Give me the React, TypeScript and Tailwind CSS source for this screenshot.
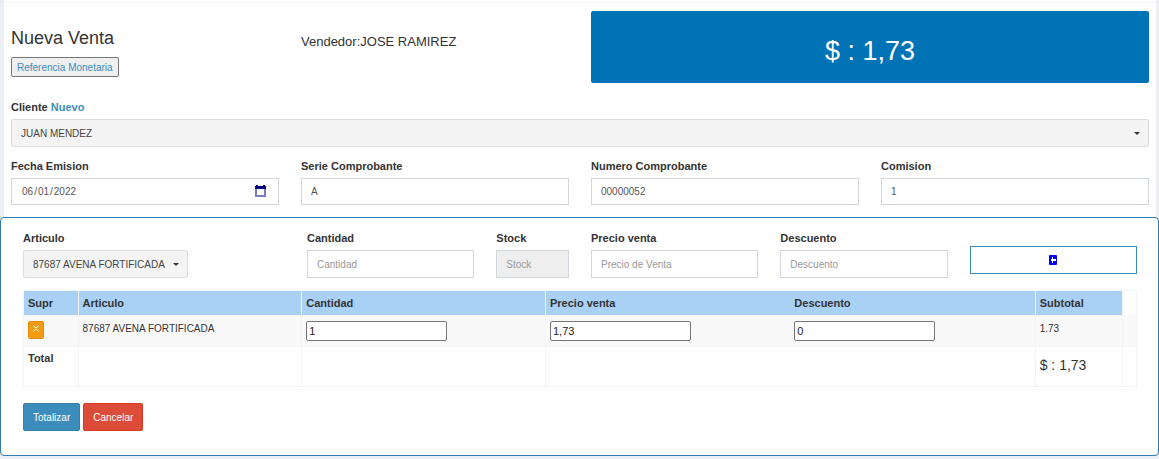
import type { InputHTMLAttributes, ReactNode, SelectHTMLAttributes } from 'react';

const fieldClass =
  'block w-full rounded-none border border-[#d2d6de] px-[9px] text-[10px] text-[#555555] outline-none placeholder:text-[#999999] disabled:bg-[#eeeeee]';

function Label({ htmlFor, children }: { htmlFor: string; children: ReactNode }) {
  return (
    <label htmlFor={htmlFor} className="mb-1 block text-[11px] leading-4 font-bold">
      {children}
    </label>
  );
}

type FieldProps = InputHTMLAttributes<HTMLInputElement> & { id: string; label: string };

function Field({ id, label, className = 'h-7', ...rest }: FieldProps) {
  return (
    <div>
      <Label htmlFor={id}>{label}</Label>
      <input id={id} className={`${fieldClass} ${className}`} {...rest} />
    </div>
  );
}

function Picker({ children, ...rest }: SelectHTMLAttributes<HTMLSelectElement>) {
  return (
    <div className="relative">
      <select
        className="block h-7 w-full appearance-none rounded-[2px] border border-[#dddddd] bg-[#f4f4f4] pr-5 pl-[9px] text-[10px] text-[#444444]"
        {...rest}
      >
        {children}
      </select>
      <svg
        className="pointer-events-none absolute top-[13px] right-[9px] h-[3px] w-[6px] fill-[#333333]"
        viewBox="0 0 6 3"
        aria-hidden="true"
      >
        <path d="M0 0h6L3 3z" />
      </svg>
    </div>
  );
}

function CellInput({ label, value }: { label: string; value: string }) {
  return (
    <input
      aria-label={label}
      defaultValue={value}
      className="block h-5 w-[141px] rounded-[2px] border border-[#767676] bg-white px-[2px] text-[11px] text-[#222222]"
    />
  );
}

export default function App() {
  return (
    <div className="bg-[#ecf0f5] pb-[3px] font-['Liberation_Sans',Arial,sans-serif] text-[11px] text-[#333333]">
      <div className="mr-[3px] ml-1 bg-white pt-[2px]">
        <div className="border-t border-[#f4f4f4] px-[7px] pt-2 pb-3">
          <div className="grid grid-cols-4 gap-x-[22px]">
            <div className="pt-4">
              <h1 className="text-[18px] leading-[22px]">Nueva Venta</h1>
              <button
                type="button"
                className="mt-2 block h-5 rounded-[2px] border border-[#767676] bg-[#efefef] px-[5px] text-[10px] text-[#3c8dbc]"
              >
                Referencia Monetaria
              </button>
            </div>
            <p className="pt-[21px] text-[13px] leading-5">Vendedor:JOSE RAMIREZ</p>
            <div className="col-span-2 flex h-[72px] items-center justify-center rounded-[2px] bg-[#0073b7] pt-2 text-[27px] text-white">
              $ : 1,73
            </div>
          </div>

          <div className="mt-4">
            <div className="mb-1 text-[11px] leading-4 font-bold">
              <label htmlFor="cliente">Cliente</label>{' '}
              <a href="#nuevo" className="text-[#3c8dbc]">
                Nuevo
              </a>
            </div>
            <Picker id="cliente">
              <option>JUAN MENDEZ</option>
            </Picker>
          </div>

          <div className="mt-[11px] grid grid-cols-4 gap-x-[22px]">
            <div className="relative">
              <Label htmlFor="fecha">Fecha Emision</Label>
              <input
                id="fecha"
                type="date"
                defaultValue="2022-06-01"
                className={`${fieldClass} h-[27px] [&::-webkit-calendar-picker-indicator]:opacity-0`}
              />
              <svg
                className="pointer-events-none absolute right-[13px] bottom-2 h-[12px] w-[11px]"
                viewBox="0 0 11 12"
                aria-hidden="true"
              >
                <path d="M1 3v8h9V3" fill="none" stroke="#7b7bc0" strokeWidth="2" />
                <path d="M1 0h2v1h5V0h2v1h1v3H0V1h1z" fill="#000080" />
              </svg>
            </div>
            <Field id="serie" label="Serie Comprobante" defaultValue="A" className="h-[27px]" />
            <Field id="numero" label="Numero Comprobante" defaultValue="00000052" className="h-[27px]" />
            <Field id="comision" label="Comision" defaultValue="1" className="h-[27px]" />
          </div>
        </div>
      </div>

      <div className="rounded-[4px] border border-[#337ab7] bg-white pt-3 pr-[21px] pb-6 pl-[22px]">
        <div className="grid grid-cols-12 gap-x-[22px]">
          <div className="col-span-3">
            <Label htmlFor="articulo">Articulo</Label>
            <div className="w-[165px]">
              <Picker id="articulo">
                <option>87687 AVENA FORTIFICADA</option>
              </Picker>
            </div>
          </div>
          <div className="col-span-2">
            <Field id="cantidad" label="Cantidad" placeholder="Cantidad" />
          </div>
          <div>
            <Field id="stock" label="Stock" placeholder="Stock" disabled />
          </div>
          <div className="col-span-2">
            <Field id="precio" label="Precio venta" placeholder="Precio de Venta" />
          </div>
          <div className="col-span-2">
            <Field id="descuento" label="Descuento" placeholder="Descuento" />
          </div>
          <div className="col-span-2 pt-4">
            <button
              type="button"
              aria-label="Agregar"
              className="flex h-7 w-full items-center justify-center border border-[#3c8dbc] bg-white"
            >
              <svg className="h-[10px] w-[8px]" viewBox="0 0 8 10" aria-hidden="true">
                <rect width="8" height="10" rx="1" fill="#0000ff" />
                <path d="M3 2h1v2h3v2H4v2H3V6H2V4h1z" fill="#ffffff" />
              </svg>
            </button>
          </div>
        </div>

        <table className="mt-3 w-full table-fixed border-collapse text-left [&_td]:border [&_td]:border-[#f4f4f4] [&_td]:px-[3px] [&_td]:align-top [&_th]:border [&_th]:border-[#f4f4f4] [&_th]:px-[4px]">
          <colgroup>
            <col className="w-[4.9%]" />
            <col className="w-[20.1%]" />
            <col className="w-[21.9%]" />
            <col className="w-[22%]" />
            <col className="w-[22%]" />
            <col className="w-[7.8%]" />
            <col className="w-[1.3%]" />
          </colgroup>
          <thead>
            <tr className="h-[25px] bg-[#a9d0f5]">
              <th scope="col">Supr</th>
              <th scope="col">Articulo</th>
              <th scope="col">Cantidad</th>
              <th scope="col" className="border-r-0!">Precio venta</th>
              <th scope="col" className="border-l-0!">Descuento</th>
              <th scope="col">Subtotal</th>
              <td className="bg-white" />
            </tr>
          </thead>
          <tbody className="[&_td]:pl-[4px]">
            <tr className="h-[31px] bg-[#f9f9f9]">
              <td className="pt-[5px]">
                <button
                  type="button"
                  aria-label="Suprimir"
                  className="flex h-[18px] w-4 items-center justify-center rounded-[2px] border border-[#e08e0b] bg-[#f39c12]"
                >
                  <svg className="-mt-1 h-[7px] w-[6px]" viewBox="0 0 6 7" aria-hidden="true">
                    <path d="M.5.5 2 2.500h2L5.500.5M.5 6.500 2 4.500h2l1.500 2" fill="none" stroke="#ffffff" strokeWidth="1" />
                  </svg>
                </button>
              </td>
              <td className="pt-[5px] text-[10px] leading-4">87687 AVENA FORTIFICADA</td>
              <td className="pt-[5px]">
                <CellInput label="Cantidad" value="1" />
              </td>
              <td className="border-r-0! pt-[5px]">
                <CellInput label="Precio venta" value="1,73" />
              </td>
              <td className="border-l-0! pt-[5px]">
                <CellInput label="Descuento" value="0" />
              </td>
              <td className="pt-[5px] text-[10px] leading-4">1.73</td>
              <td />
            </tr>
            <tr className="h-10">
              <th scope="row" className="pt-[3px] align-top leading-4">Total</th>
              <td />
              <td />
              <td className="border-r-0!" />
              <td className="border-l-0!" />
              <td className="pt-2 text-[14px] leading-5">$ : 1,73</td>
              <td />
            </tr>
          </tbody>
        </table>

        <div className="mt-4 flex gap-[3px] text-[10px]">
          <button type="button" className="h-7 rounded-[2px] border border-[#367fa9] bg-[#3c8dbc] px-[9px] text-white">
            Totalizar
          </button>
          <button type="button" className="h-7 rounded-[2px] border border-[#d73925] bg-[#dd4b39] px-[9px] text-white">
            Cancelar
          </button>
        </div>
      </div>
    </div>
  );
}
